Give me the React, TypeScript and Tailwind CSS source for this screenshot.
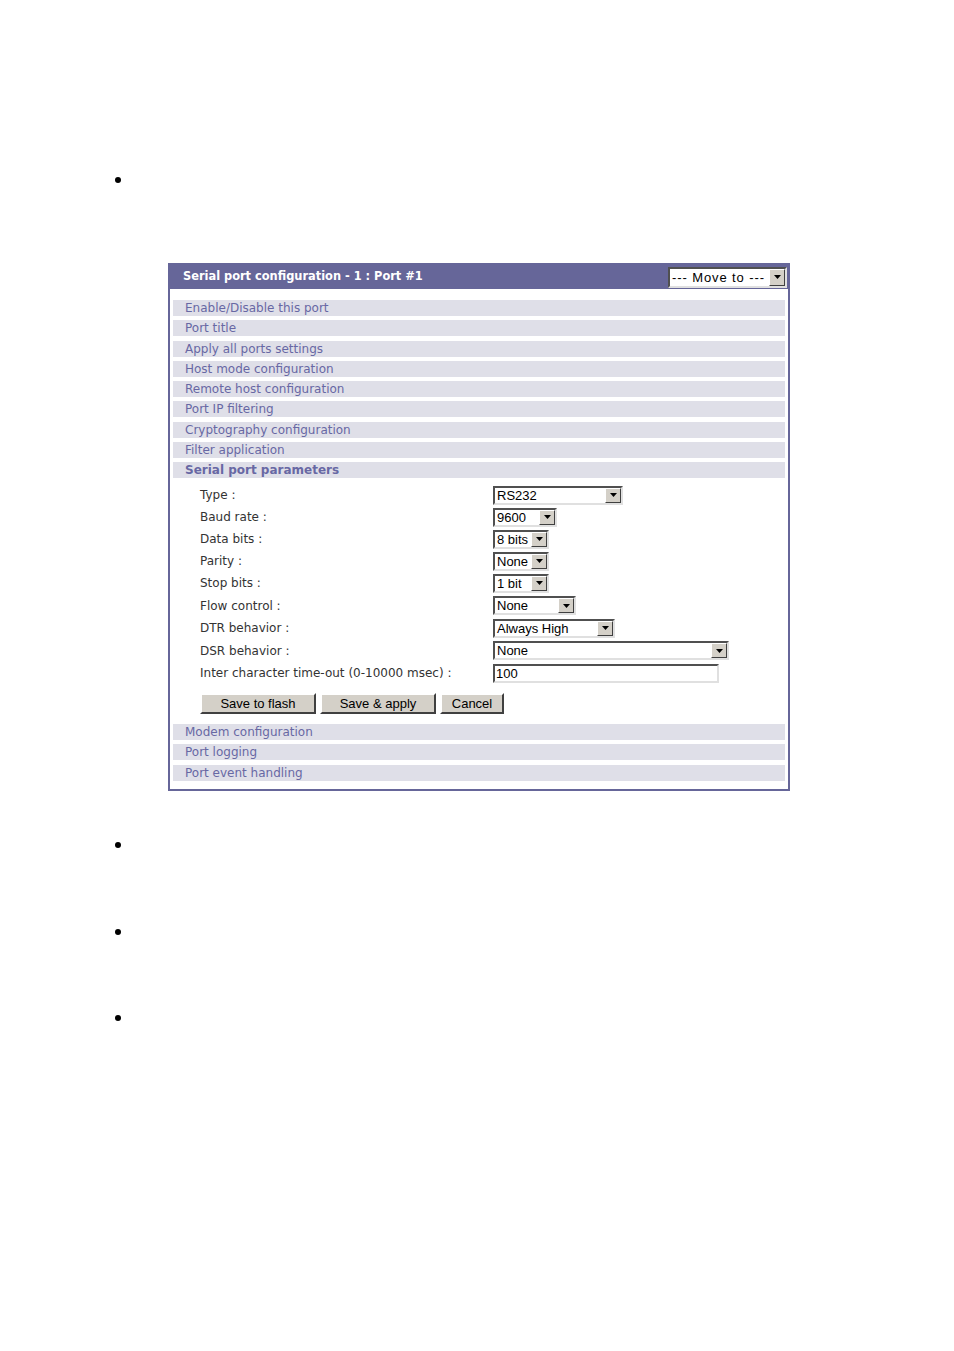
import React from "react";

const verdana = { fontFamily: '"DejaVu Sans", Verdana, sans-serif' };
const sys = { fontFamily: '"Liberation Sans", Arial, sans-serif' };

function Arrow({ h }: { h: string }) {
  return (
    <div
      className={`w-[16px] ${h} bg-[#d4d0c8] border border-t-[#ffffff] border-l-[#ffffff] border-b-[#404040] border-r-[#404040] flex items-center justify-center shrink-0`}
    >
      <svg width="7" height="4" viewBox="0 0 7 4">
        <polygon points="0,0 7,0 3.5,4" fill="#000" />
      </svg>
    </div>
  );
}

function FakeSelect({ w, text }: { w: string; text: string }) {
  return (
    <div
      className={`${w} h-[19px] flex items-stretch bg-white border-2 border-t-[#505050] border-l-[#505050] border-b-[#e0e0e0] border-r-[#e0e0e0]`}
    >
      <div className="flex-1 pl-[2px] text-[13px] leading-[15px] text-black overflow-hidden whitespace-nowrap" style={sys}>
        {text}
      </div>
      <Arrow h="h-[15px]" />
    </div>
  );
}

function Bar({ label, bold }: { label: string; bold?: boolean }) {
  return (
    <div
      className={`h-[16px] bg-[#dfdfe8] pl-[12px] text-[12px] leading-[16px] text-[#6868a4] ${bold ? "font-bold" : ""}`}
      style={verdana}
    >
      {label}
    </div>
  );
}

function Btn({ w, label }: { w: string; label: string }) {
  return (
    <div
      className={`${w} h-[21px] bg-[#d4d0c8] border-2 border-t-[#ffffff] border-l-[#ffffff] border-b-[#404040] border-r-[#404040] flex items-center justify-center text-[13px] text-black`}
      style={sys}
    >
      {label}
    </div>
  );
}

function Row({ label, children, h = "h-[22px]" }: { label: string; children: React.ReactNode; h?: string }) {
  return (
    <div className={`flex items-center ${h}`}>
      <div className="w-[293px] text-[12px] text-[#333333] whitespace-nowrap" style={verdana}>
        {label}
      </div>
      {children}
    </div>
  );
}

function Bullet({ mt }: { mt: string }) {
  return <div className={`${mt} ml-[115px] w-[6px] h-[6px] rounded-full bg-black`} />;
}

export default function App() {
  const topBars = [
    "Enable/Disable this port",
    "Port title",
    "Apply all ports settings",
    "Host mode configuration",
    "Remote host configuration",
    "Port IP filtering",
    "Cryptography configuration",
    "Filter application",
  ];
  return (
    <div className="w-[954px] min-h-[1351px] bg-white flex flex-col">
      <Bullet mt="mt-[177px]" />
      <div className="mt-[80px] ml-[168px] w-[622px] border-2 border-[#666699] bg-white">
        <div className="h-[24px] bg-[#666699] flex items-center justify-between pl-[13px] pr-[1px]">
          <div className="text-white font-bold text-[11.4px]" style={verdana}>
            Serial port configuration - 1 : Port #1
          </div>
          <div className="w-[119px] h-[21px] flex items-stretch bg-white border-2 border-t-[#505050] border-l-[#505050] border-b-[#e0e0e0] border-r-[#e0e0e0]">
            <div className="flex-1 pl-[2px] text-[13px] leading-[17px] tracking-[0.9px] text-black whitespace-nowrap" style={sys}>
              --- Move to ---
            </div>
            <Arrow h="h-[17px]" />
          </div>
        </div>
        <div className="px-[3px] pt-[11px] flex flex-col gap-[4.25px]">
          {topBars.map((b) => (
            <Bar key={b} label={b} />
          ))}
          <Bar label="Serial port parameters" bold />
        </div>
        <div className="pl-[30px] pt-[6px] flex flex-col">
          <Row label="Type :">
            <FakeSelect w="w-[130px]" text="RS232" />
          </Row>
          <Row label="Baud rate :">
            <FakeSelect w="w-[64px]" text="9600" />
          </Row>
          <Row label="Data bits :">
            <FakeSelect w="w-[56px]" text="8 bits" />
          </Row>
          <Row label="Parity :">
            <FakeSelect w="w-[56px]" text="None" />
          </Row>
          <Row label="Stop bits :">
            <FakeSelect w="w-[56px]" text="1 bit" />
          </Row>
          <Row label="Flow control :" h="h-[23px]">
            <FakeSelect w="w-[83px]" text="None" />
          </Row>
          <Row label="DTR behavior :">
            <FakeSelect w="w-[122px]" text="Always High" />
          </Row>
          <Row label="DSR behavior :" h="h-[23px]">
            <FakeSelect w="w-[236px]" text="None" />
          </Row>
          <Row label="Inter character time-out (0-10000 msec) :">
            <div className="w-[226px] h-[19px] bg-white border-2 border-t-[#505050] border-l-[#505050] border-b-[#e0e0e0] border-r-[#e0e0e0] pl-[1px] text-[13px] leading-[15px] text-black" style={sys}>
              100
            </div>
          </Row>
          <div className="flex gap-[4px] mt-[9px]">
            <Btn w="w-[116px]" label="Save to flash" />
            <Btn w="w-[116px]" label="Save & apply" />
            <Btn w="w-[64px]" label="Cancel" />
          </div>
        </div>
        <div className="px-[3px] pt-[10px] pb-[8px] flex flex-col gap-[4.25px]">
          <Bar label="Modem configuration" />
          <Bar label="Port logging" />
          <Bar label="Port event handling" />
        </div>
      </div>
      <Bullet mt="mt-[51px]" />
      <Bullet mt="mt-[81px]" />
      <Bullet mt="mt-[80px]" />
    </div>
  );
}
